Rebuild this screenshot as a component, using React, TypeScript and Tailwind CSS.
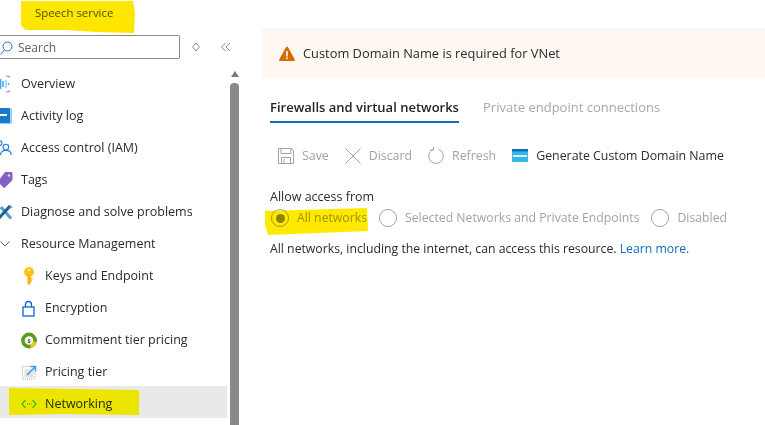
import React from 'react';

const font = { fontFamily: '"Open Sans", "Noto Sans", sans-serif' };

const OverviewIcon = () => (
  <svg width="16" height="18" viewBox="0 0 16 18" fill="none">
    <path d="M9 1h3M9 17h3M12 1v2M12 15v2" stroke="#9b7fe0" strokeWidth="1" />
    <path d="M1 7v4M3.500 4v10M6 6v6" stroke="#39a9e8" strokeWidth="1.600" />
    <path d="M9 5v8" stroke="#7fd0f5" strokeWidth="1.400" />
    <path d="M11.500 8v2" stroke="#5ea0ef" strokeWidth="1.400" />
  </svg>
);

const ActivityIcon = () => (
  <svg width="16" height="16" viewBox="0 0 16 16">
    <rect x="0" y="0" width="15" height="16" rx="1.500" fill="#9fd0f5" />
    <rect x="0" y="0" width="13" height="15" rx="1" fill="#1b78d0" />
    <rect x="3" y="6" width="7" height="2" fill="#ffffff" />
  </svg>
);

const AccessIcon = () => (
  <svg width="18" height="18" viewBox="0 0 18 18" fill="none" stroke="#2a7fdc" strokeWidth="1.300">
    <circle cx="3" cy="3.500" r="2.600" />
    <circle cx="10" cy="8" r="3.200" />
    <path d="M4 17c0-3.500 2.500-5.400 6-5.400s6 1.900 6 5.400" />
    <path d="M0 10c1 0 2 .5 3 1.500" />
  </svg>
);

const TagIcon = () => (
  <svg width="15" height="16" viewBox="0 0 15 16">
    <path d="M7 0h6a1.500 1.500 0 0 1 1.500 1.500V8L7 15.500a1.200 1.200 0 0 1-1.700 0L.5 10.500a1.200 1.200 0 0 1 0-1.700z" fill="#8661c5" />
    <circle cx="11" cy="3.500" r="1.200" fill="#e6dcf7" />
  </svg>
);

const WrenchIcon = () => (
  <svg width="15" height="16" viewBox="0 0 15 16" fill="none">
    <path d="M3 3l10 11.500" stroke="#41a5dc" strokeWidth="3" />
    <path d="M12 2L1 14" stroke="#1f5f8f" strokeWidth="3" />
    <path d="M12 0.500l2.500 3-3 1.500z" fill="#7a8a96" />
  </svg>
);

const Chevron = () => (
  <svg width="10" height="6" viewBox="0 0 10 6" fill="none" stroke="#555555" strokeWidth="0.900">
    <path d="M0.500 0.500L5 5l4.500-4.500" />
  </svg>
);

const KeyIcon = () => (
  <svg width="12" height="18" viewBox="0 0 12 18">
    <circle cx="6" cy="5" r="5" fill="#fcc419" />
    <path d="M4.500 8h3v8.500L6 18l-1.500-1.500zM7.500 11H9.500v1.500H7.500zM7.500 13.500H9v1.500H7.500z" fill="#fab005" />
    <circle cx="6" cy="3" r="1.100" fill="#fff3bf" />
  </svg>
);

const LockIcon = () => (
  <svg width="14" height="17" viewBox="0 0 14 17" fill="none" stroke="#0f62d6" strokeWidth="1.300">
    <rect x="1" y="7" width="11" height="9" />
    <path d="M3.500 7V4.500a3 3 0 0 1 6 0V7" />
  </svg>
);

const CommitmentIcon = () => (
  <svg width="17" height="17" viewBox="0 0 17 17" fill="none">
    <circle cx="8.500" cy="8.500" r="6.500" stroke="#5c9a1e" strokeWidth="3.800" />
    <path d="M14.800 10A6.500 6.500 0 0 1 10 14.800" stroke="#f2c811" strokeWidth="3.800" />
    <text x="8.500" y="11" textAnchor="middle" fontSize="6" fontWeight="700" fill="#333333" style={font}>$</text>
  </svg>
);

const PricingIcon = () => (
  <svg width="15" height="15" viewBox="0 0 15 15" fill="none">
    <rect x="0.500" y="1.500" width="12.500" height="12.500" stroke="#a6b8a6" strokeDasharray="1 1" />
    <rect x="2.500" y="4" width="9" height="8.500" fill="#e3e3e3" />
    <path d="M5 10L13 2M8.500 1.500h5v5" stroke="#3c9be8" strokeWidth="1.500" />
  </svg>
);

const NetworkIcon = () => (
  <svg width="16" height="10" viewBox="0 0 16 10" fill="none">
    <path d="M4.500 1L1 5l3.500 4M11.500 1L15 5l-3.500 4" stroke="#3fc010" strokeWidth="1.200" />
    <path d="M6 5h1M8 5h1M10 5h.500" stroke="#2f8fe0" strokeWidth="1" />
  </svg>
);

// every menu row is 32px tall, children are indented
const menu = [
  { label: 'Overview', icon: <OverviewIcon />, w: 'ml-[-3px]' },
  { label: 'Activity log', icon: <ActivityIcon />, w: 'ml-[-3px]' },
  { label: 'Access control (IAM)', icon: <AccessIcon />, w: 'ml-[-3px]' },
  { label: 'Tags', icon: <TagIcon />, w: 'ml-[-3px]' },
  { label: 'Diagnose and solve problems', icon: <WrenchIcon />, w: 'ml-[-3px]' },
  { label: 'Resource Management', icon: <Chevron />, w: 'ml-[-3px]' },
  { label: 'Keys and Endpoint', icon: <KeyIcon />, w: 'ml-[21px]' },
  { label: 'Encryption', icon: <LockIcon />, w: 'ml-[21px]' },
  { label: 'Commitment tier pricing', icon: <CommitmentIcon />, w: 'ml-[21px]' },
  { label: 'Pricing tier', icon: <PricingIcon />, w: 'ml-[21px]' },
  { label: 'Networking', icon: <NetworkIcon />, w: 'ml-[21px]', active: true },
];

const Tool = ({ icon, label, on }: { icon: React.ReactNode; label: string; on?: boolean }) => (
  <div className={`flex items-center gap-[8px] ${on ? 'text-[#2b2b2b]' : 'text-[#a3a3a3]'}`}>
    {icon}
    <span>{label}</span>
  </div>
);

const Radio = ({ label, on }: { label: string; on?: boolean }) => (
  <div className="flex items-center gap-[8px] text-[#a3a3a3]">
    <span className="flex h-[18px] w-[18px] items-center justify-center rounded-full border border-[#a6a6a6]">
      {on && <span className="h-[9px] w-[9px] rounded-full bg-[#8f8f8f]" />}
    </span>
    <span>{label}</span>
  </div>
);

export default function App() {
  return (
    <div className="relative flex h-[425px] w-[765px] overflow-hidden bg-white text-[12.5px] text-[#2b2b2b]" style={font}>
      {/* left blade menu */}
      <div className="flex w-[240px] shrink-0 flex-col">
        <div className="h-[35px] pl-[35px] pt-[4px] text-[11.4px] text-[#4a5a20]">Speech service</div>
        <div className="flex h-[24px] items-center">
          <div className="flex h-[24px] w-[180px] items-center rounded-r-[2px] border border-l-0 border-[#8a8a8a] pt-[1px]">
            <svg width="13" height="14" viewBox="0 0 13 14" fill="none" stroke="#1f6fc0" strokeWidth="1">
              <circle cx="7.500" cy="5.500" r="4.500" />
              <path d="M4.300 9l-3.800 4.500" />
            </svg>
            <span className="ml-[5px] text-[12px] text-[#605e5c]">Search</span>
          </div>
          <svg className="ml-[12px]" width="8" height="10" viewBox="0 0 8 10" fill="none" stroke="#777777" strokeWidth="0.900">
            <path d="M4 1l3 3.500v1L4 9 1 5.500v-1z" />
          </svg>
          <svg className="ml-[21px]" width="10" height="10" viewBox="0 0 10 10" fill="none" stroke="#777777" strokeWidth="0.900">
            <path d="M4.500 1L.5 5l4 4M9 1L5 5l4 4" />
          </svg>
        </div>
        <div className="flex min-h-0 flex-1 pt-[7px]">
          <div className="w-[227px] shrink-0">
            {menu.map((m) => (
              <div key={m.label} className={`flex h-[32px] items-center pt-[4px] ${m.active ? 'bg-[#ebe9e7]' : ''}`}>
                <span className={`mr-[8px] flex w-[16px] shrink-0 justify-center ${m.w}`}>{m.icon}</span>
                <span>{m.label}</span>
              </div>
            ))}
          </div>
          <div className="ml-[3px] flex w-[9px] flex-col items-center">
            <div className="mt-[5px] h-0 w-0 border-x-[4.500px] border-b-[6px] border-x-transparent border-b-[#7a7a7a]" />
            <div className="mt-[6px] w-[9px] flex-1 rounded-t-[4px] bg-[#8a8a8a]" />
          </div>
        </div>
      </div>

      {/* networking content */}
      <div className="flex min-w-0 flex-1 flex-col pl-[22px] pt-[28px]">
        <div className="flex h-[50px] items-center gap-[8px] bg-[#fff7f1] pl-[17px]">
          <svg width="16" height="15" viewBox="0 0 16 15">
            <path d="M8 .5a1 1 0 0 1 .9.5l6.900 12.500a1 1 0 0 1-.9 1.500H1.100a1 1 0 0 1-.9-1.500L7.100 1a1 1 0 0 1 .9-.5z" fill="#d66a00" />
            <rect x="7.200" y="5" width="1.600" height="5.500" fill="#ffffff" />
            <rect x="7.200" y="11.500" width="1.600" height="1.600" fill="#ffffff" />
          </svg>
          <span className="pt-[1px] text-[12.85px]">Custom Domain Name is required for VNet</span>
        </div>
        <div className="ml-[8px] mt-[17px] flex gap-[24px] text-[13px]">
          <div className="h-[28px] w-[189px] whitespace-nowrap border-b-[2px] border-[#0f6cbd] pt-[3px] font-semibold text-[#242424]">Firewalls and virtual networks</div>
          <div className="pt-[3px] text-[#a8a8a8]">Private endpoint connections</div>
        </div>
        <div className="ml-[8px] mt-[21px] flex h-[24px] items-center gap-[16px] pl-[8px] text-[12.35px]">
          <Tool
            label="Save"
            icon={
              <svg width="16" height="16" viewBox="0 0 16 16" fill="none" stroke="#a3a3a3" strokeWidth="1">
                <path d="M.5.5h13l2 2v13H.5z" />
                <path d="M3 .5v5h10v-5M3.500 15.500V9.500h9v6M6 11v4" />
              </svg>
            }
          />
          <Tool
            label="Discard"
            icon={
              <svg width="16" height="16" viewBox="0 0 16 16" fill="none" stroke="#a3a3a3" strokeWidth="1">
                <path d="M.5.5l15 15M15.500.5l-15 15" />
              </svg>
            }
          />
          <Tool
            label="Refresh"
            icon={
              <svg width="16" height="17" viewBox="0 0 16 17" fill="none" stroke="#a3a3a3" strokeWidth="1">
                <path d="M10.500 2.300a7.300 7.300 0 1 1-5 0M5.500 0v3H2" />
              </svg>
            }
          />
          <Tool
            on
            label="Generate Custom Domain Name"
            icon={
              <svg width="16" height="13" viewBox="0 0 16 13">
                <rect width="16" height="13" rx="1" fill="#38b6e8" />
                <rect width="16" height="2.500" fill="#0f6cbd" />
                <rect x="1" y="6" width="14" height="2" fill="#d4eefa" />
              </svg>
            }
          />
        </div>
        <div className="ml-[8px] mt-[20px] leading-[17px]">Allow access from</div>
        <div className="ml-[9px] mt-[3px] flex h-[20px] items-center gap-[12px] text-[12.25px]">
          <Radio on label="All networks" />
          <Radio label="Selected Networks and Private Endpoints" />
          <Radio label="Disabled" />
        </div>
        <div className="ml-[8px] mt-[12px] text-[12.25px]">
          All networks, including the internet, can access this resource. <span className="text-[#0f6cbd]">Learn more.</span>
        </div>
      </div>

      {/* yellow marker strokes sit on top of the page */}
      <svg className="pointer-events-none absolute inset-0 mix-blend-multiply" width="765" height="425" viewBox="0 0 765 425">
        <path d="M21 1h112l2 12-1 20-38-1-30-2-40 0-5-4z" fill="#ffe600" />
        <path d="M9 388l130 2v25l-75-1-55 1z" fill="#fffb00" />
        <path d="M265 211l102-3 1 23-50 2-50 2-3-10z" fill="#ffe900" />
      </svg>
    </div>
  );
}
